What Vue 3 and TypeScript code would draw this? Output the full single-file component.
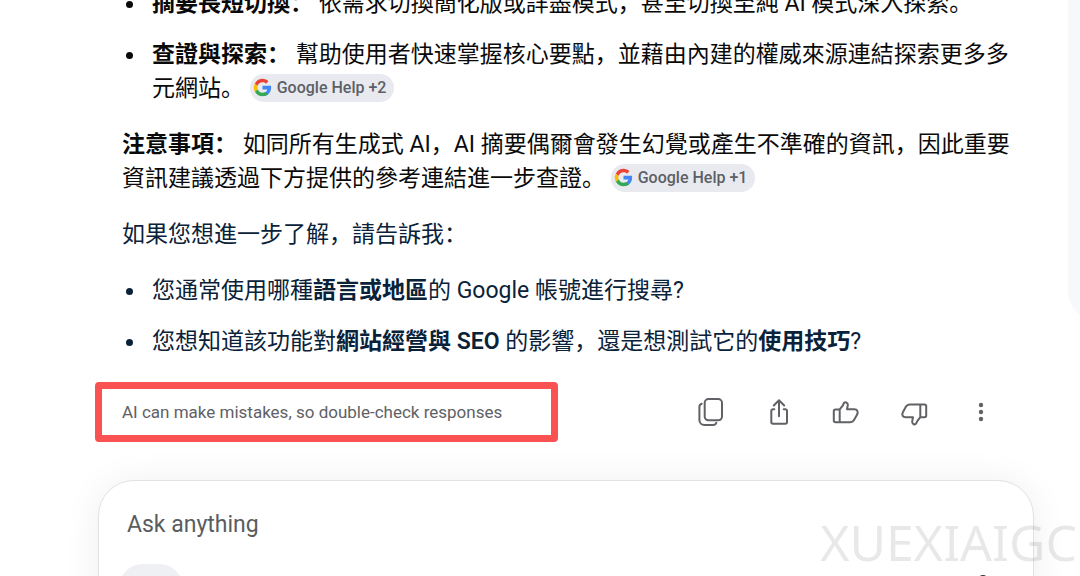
<script setup lang="ts">
import { ref } from 'vue'

const question = ref('')
const gLogo = [
  { d: 'M43.6 20H24v8.4h11.2C34.1 33.6 29.7 37 24 37l5 6.8C38.5 41.7 44 34 44 24c0-1.4-.1-2.7-.4-4z', fill: '#4285f4' },
  { d: 'M6.3 33.7C9.7 40 16.3 44 24 44c4.9 0 9.3-1.6 12.7-4.6l-6.5-5.2C28.4 35.4 26.3 36 24 36c-5.2 0-9.6-3.3-11.2-7.9z', fill: '#34a853' },
  { d: 'M12.8 28.1a12.500 12.500 0 0 1 0-8.200l-6.500-5.400a20 20 0 0 0 0 19.200z', fill: '#fbbc05' },
  { d: 'M24 12c3.1 0 5.9 1.2 8 3.1l5.7-5.7C34 6.1 29.3 4 24 4 16.3 4 9.7 8.3 6.3 14.7l6.5 5.2C14.4 15.3 18.8 12 24 12z', fill: '#ea4335' },
]
</script>

<template>
  <div class="page" lang="zh-CN">
    <aside class="side-panel" aria-hidden="true"></aside>
    <main class="column">
      <article class="answer">
        <ul class="list">
          <li><strong>摘要長短切換：</strong> 依需求切換簡化版或詳盡模式，甚至切換至純 AI 模式深入探索。</li>
          <li>
            <strong>查證與探索：</strong> 幫助使用者快速掌握核心要點，並藉由內建的權威來源連結探索更多多元網站。
            <button class="chip" type="button">
              <svg viewBox="2 2 44 44" aria-hidden="true"><path v-for="p in gLogo" :key="p.fill" :d="p.d" :fill="p.fill" /></svg>Google Help +2
            </button>
          </li>
        </ul>
        <p>
          <strong>注意事項：</strong> 如同所有生成式 AI，AI 摘要偶爾會發生幻覺或產生不準確的資訊，因此重要資訊建議透過下方提供的參考連結進一步查證。
          <button class="chip" type="button">
            <svg viewBox="2 2 44 44" aria-hidden="true"><path v-for="p in gLogo" :key="p.fill" :d="p.d" :fill="p.fill" /></svg>Google Help +1
          </button>
        </p>
        <section class="follow-up">
          <p>如果您想進一步了解，請告訴我：</p>
          <ul class="list">
            <li>您通常使用哪種<strong>語言或地區</strong>的 Google 帳號進行搜尋?</li>
            <li>您想知道該功能對<strong>網站經營與 SEO</strong> 的影響，還是想測試它的<strong>使用技巧</strong>?</li>
          </ul>
        </section>
      </article>

      <footer class="toolbar">
        <div class="notice">AI can make mistakes, so double-check responses</div>
        <div class="actions">
          <button type="button" aria-label="Copy">
            <svg viewBox="0 0 32 32"><rect x="9.7" y="3" width="17.3" height="21.3" rx="3.8" /><path d="M6.7 7.8C5.2 8.3 4.4 9.4 4.4 11V24a5 5 0 0 0 5 5H18c1.8 0 2.9-.8 3.3-2.3" /></svg>
          </button>
          <button type="button" aria-label="Share">
            <svg viewBox="0 0 32 32"><path d="M11.3 13.2H10a1.7 1.7 0 0 0-1.7 1.700V26A1.700 1.700 0 0 0 10 27.700H22.300A1.700 1.700 0 0 0 24 26V14.900a1.700 1.700 0 0 0-1.700-1.700H20.700M16 20.200V4.600M10.800 9.500 16 4.300l5.200 5.200" /></svg>
          </button>
          <button type="button" aria-label="Good response">
            <svg viewBox="0 0 32 32"><path d="M9.7 13.4H5.5A1.7 1.7 0 0 0 3.8 15.1V24.5A1.7 1.7 0 0 0 5.5 26.2H20.3C22 26.2 23.2 25.5 24 24.1L27 18.7C28.6 15.8 27.3 13.3 24.3 13.3H17L17.8 9.2C18.2 6.9 15.500 5.200 13.900 7L12.900 9.300 9.700 13.400V26.200" /></svg>
          </button>
          <button type="button" aria-label="Bad response">
            <svg viewBox="0 0 32 32"><path transform="rotate(180 16 17.3)" d="M9.7 13.4H5.5A1.7 1.7 0 0 0 3.8 15.1V24.5A1.7 1.7 0 0 0 5.5 26.2H20.3C22 26.2 23.2 25.5 24 24.1L27 18.7C28.6 15.8 27.3 13.3 24.3 13.3H17L17.8 9.2C18.2 6.9 15.500 5.200 13.900 7L12.900 9.300 9.700 13.400V26.200" /></svg>
          </button>
          <button type="button" aria-label="More options">
            <svg class="dots" viewBox="0 0 32 32"><circle cx="16" cy="9" r="2.2" /><circle cx="16" cy="16" r="2.2" /><circle cx="16" cy="23" r="2.2" /></svg>
          </button>
        </div>
      </footer>

      <form class="composer" @submit.prevent>
        <input v-model="question" type="text" placeholder="Ask anything" aria-label="Ask anything" />
        <div class="composer-tools">
          <button class="add" type="button" aria-label="Add attachment"></button>
          <button class="mic" type="button" aria-label="Voice input">
            <svg viewBox="0 0 24 24"><rect x="8" y="1" width="8" height="14" rx="4" /><path d="M4 11a8 8 0 0 0 16 0M12 19v4" /></svg>
          </button>
        </div>
      </form>
    </main>
    <div class="watermark">XUEXIAIGC</div>
  </div>
</template>

<style>
body {
  margin: 0;
  background: #fff;
}
</style>

<style scoped>
.page {
  position: relative;
  height: 100vh;
  overflow: hidden;
  font-family: Roboto, "Noto Sans CJK SC", sans-serif;
  font-size: 23px;
  line-height: 34px;
  color: #0a0a0a;
}
button,
input {
  font: inherit;
  border: 0;
  padding: 0;
  background: none;
}
.side-panel {
  position: absolute;
  top: 0;
  right: -48px;
  width: 60px;
  height: 320px;
  border-radius: 0 0 28px 28px;
  background: #f7f8fa;
}
.column {
  display: flex;
  flex-direction: column;
  padding: 0 46px 0 98px;
}
.answer {
  margin-top: -13px;
  padding: 0 24px;
}
.list {
  display: flex;
  flex-direction: column;
  gap: 17px;
  margin: 0;
  padding: 0;
  list-style: none;
}
.list li {
  position: relative;
  padding-left: 30px;
}
.list li::before {
  content: "";
  position: absolute;
  left: 4px;
  top: 14px;
  width: 7px;
  height: 7px;
  border-radius: 50%;
  background: currentColor;
}
p {
  margin: 22px 0;
}
strong {
  font-weight: 600;
}
.follow-up {
  color: #0a2239;
}
.chip {
  display: inline-flex;
  align-items: center;
  gap: 5px;
  height: 28px;
  padding: 0 8px 0 3px;
  border-radius: 14px;
  background: #e9eaf0;
  color: #5c5f66;
  font-size: 16px;
  font-weight: 500;
  line-height: 28px;
  vertical-align: middle;
  margin: -4px 0 0;
  white-space: nowrap;
}
.chip svg {
  width: 19px;
  height: 19px;
}
.toolbar {
  display: flex;
  justify-content: space-between;
  align-items: center;
  margin: 23px 31px 38px -3px;
}
.notice {
  box-sizing: border-box;
  height: 60px;
  padding: 0 49px 0 20px;
  border: 7px solid #fa5252;
  border-radius: 4px;
  color: #5f6165;
  font-size: 17px;
  line-height: 46px;
  white-space: nowrap;
}
.actions {
  display: flex;
  justify-content: space-between;
  width: 314px;
}
.actions button {
  display: flex;
  align-items: center;
  justify-content: center;
  width: 44px;
  height: 44px;
}
.actions svg {
  width: 32px;
  height: 32px;
  fill: none;
  stroke: #606266;
  stroke-width: 2;
  stroke-linecap: round;
  stroke-linejoin: round;
}
.actions .dots {
  fill: #606266;
  stroke: none;
}
.composer {
  padding: 27px 20px 20px;
  border: 1px solid #e1e2e4;
  border-radius: 36px;
  background: #fff;
  box-shadow: 0 2px 36px rgba(0, 0, 0, 0.07);
}
.composer input {
  display: block;
  box-sizing: border-box;
  width: 100%;
  height: 34px;
  padding: 0 8px;
  outline: none;
}
.composer input::placeholder {
  color: #5a5c60;
  opacity: 1;
}
.composer-tools {
  display: flex;
  justify-content: space-between;
  align-items: center;
  margin-top: 22px;
}
.add {
  width: 64px;
  height: 48px;
  border-radius: 24px;
  background: #eff0f4;
}
.mic {
  display: flex;
  padding: 0 17px;
}
.mic svg {
  width: 26px;
  height: 26px;
  fill: none;
  stroke: #303236;
  stroke-width: 2;
}
.watermark {
  position: absolute;
  right: 3px;
  bottom: 9px;
  font-family: "Noto Sans", sans-serif;
  font-size: 50px;
  line-height: 50px;
  color: rgba(0, 0, 0, 0.09);
  pointer-events: none;
}
</style>
